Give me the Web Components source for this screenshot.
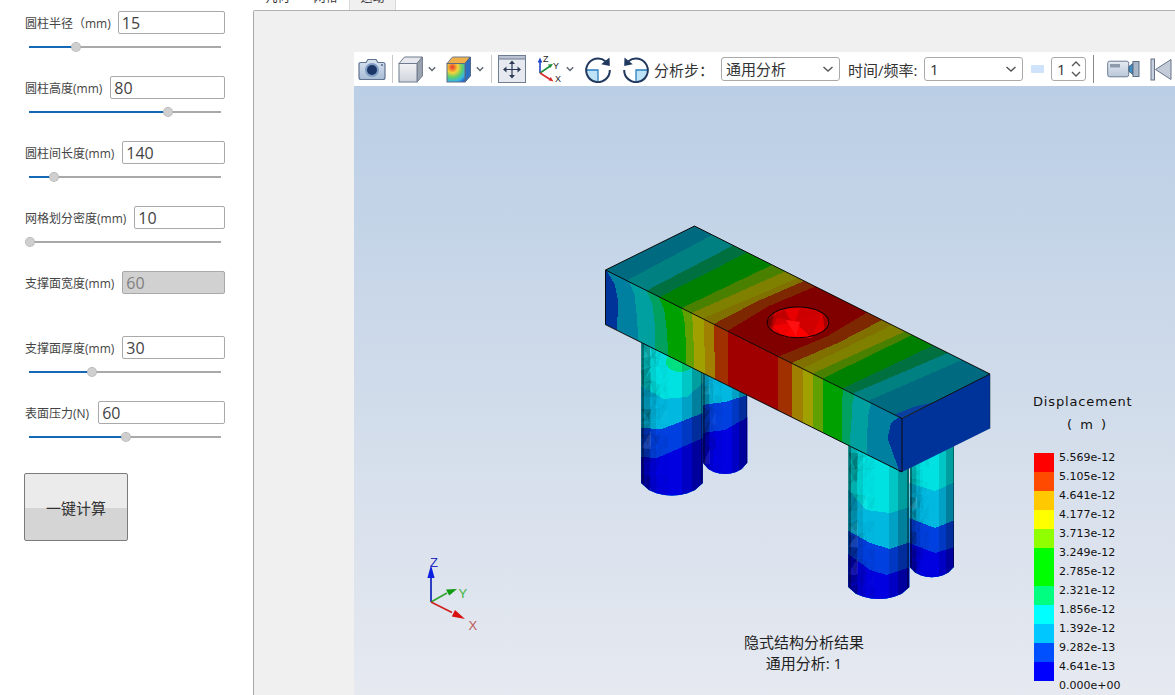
<!DOCTYPE html>
<html lang="zh">
<head>
<meta charset="utf-8">
<title>隐式结构分析</title>
<style>
html,body{margin:0;height:100%;background:#fff;overflow:hidden}
body{font-family:"Open Sans","Noto Sans CJK SC",sans-serif;color:#333}
app-shell{height:695px}
</style>
</head>
<body>
<app-shell>
  <side-panel slot="side">
    <param-row value="15" thumb="47" style="--gap:7px"><span>圆柱半径（mm)</span></param-row>
    <param-row value="80" thumb="139"><span>圆柱高度(mm)</span></param-row>
    <param-row value="140" thumb="25"><span>圆柱间长度(mm)</span></param-row>
    <param-row value="10" thumb="1"><span>网格划分密度(mm)</span></param-row>
    <param-row value="60" disabled><span>支撑面宽度(mm)</span></param-row>
    <param-row value="30" thumb="63"><span>支撑面厚度(mm)</span></param-row>
    <param-row value="60" thumb="97" style="--gap:9px"><span>表面压力(N)</span></param-row>
    <calc-button>一键计算</calc-button>
  </side-panel>
  <tab-strip slot="tabs"></tab-strip>
  <result-viewer slot="main"></result-viewer>
</app-shell>
<script>
const def=(n,html,extra={})=>{customElements.define(n,class extends HTMLElement{
  constructor(){super();this.attachShadow({mode:'open'}).innerHTML=html;}
  connectedCallback(){extra.init&&extra.init.call(this,this.shadowRoot)}
})};

def('app-shell',`<style>
:host{display:grid;grid-template-columns:253px 1fr;grid-template-rows:10px 1fr;width:1175px;overflow:hidden}
.s{grid-row:1/3;min-height:0}
.t{min-width:0}
.m{min-width:0;min-height:0;border-top:1px solid #b0b0b0;border-left:1px solid #a8a8a8;border-top-left-radius:2px;background:#f0f0f0;padding:41px 0 0 100px;overflow:hidden;display:flex}
</style>
<div class="s"><slot name="side"></slot></div>
<div class="t"><slot name="tabs"></slot></div>
<div class="m"><slot name="main"></slot></div>`);

def('side-panel',`<style>:host{display:block;padding:0 28px 0 25px;font-size:12px;color:#444}</style><slot></slot>`);

def('param-row',`<style>
:host{display:block;height:65px;box-sizing:border-box;padding-top:11px}
.top{display:flex;align-items:center;gap:var(--gap,8px);height:23px;white-space:nowrap;font-size:12px;color:#444}
.inp{flex:1;min-width:0;box-sizing:border-box;height:23px;border:1px solid #a9a9a9;border-radius:2px;padding-left:3px;font-size:16px;line-height:23px;color:#444;background:#fff}
:host([disabled]) .inp{background:#d1d1d1;color:#808080}
.sl{display:flex;align-items:center;height:12px;margin:7px 4px 0 4px;}
.f{height:2px;background:#1468b6}
.r{height:2px;flex:1;background:#a9a9a9}
.th{width:10px;height:10px;box-sizing:border-box;border-radius:50%;background:#cfcfcf;border:1px dotted #aaa;margin:0 -5px;position:relative;flex:none}
</style>
<div class="top"><slot></slot><div class="inp"></div></div>
<div class="sl"><div class="f"></div><div class="th"></div><div class="r"></div></div>`,{init(r){
  r.querySelector('.inp').textContent=this.getAttribute('value');
  if(this.hasAttribute('disabled')){r.querySelector('.sl').remove();return}
  r.querySelector('.f').style.width=this.getAttribute('thumb')+'px';
}});

def('calc-button',`<style>
:host{display:flex;width:104px;height:68px;box-sizing:border-box;margin:18px 0 0 -1px;align-items:center;justify-content:center;border:1px solid #7b7b7b;border-radius:2px;font-size:15px;color:#333;background:linear-gradient(#ebebeb 0,#ebebeb 52%,#d5d5d5 52%,#d5d5d5 100%)}
</style><slot></slot>`);

def('tab-strip',`<style>
:host{display:flex;height:10px;overflow:hidden;align-items:flex-end;font-size:12px;color:#333}
.t{width:47px;height:10px;box-sizing:border-box;text-align:center;position:relative;overflow:hidden;flex:none}
.t span{position:absolute;left:0;right:0;bottom:5px;line-height:14px}
.t.f{width:49px}
.t.a{background:#f0f0f0;border-left:1px solid #d8d8d8;border-right:1px solid #d8d8d8}
</style><div class="t f"><span>几何</span></div><div class="t"><span>网格</span></div><div class="t a"><span>运动</span></div>`);

def('tool-select',`<style>
:host{display:flex;box-sizing:border-box;height:24px;align-items:center;justify-content:space-between;border:1px solid #a9a9a9;border-radius:3px;background:#fff;padding:0 5px 0 4px;font-size:15px;color:#333;white-space:nowrap;line-height:22px}
svg{display:block}
</style><slot></slot><svg width="12" height="8" viewBox="0 0 12 8"><path d="M1.5 2L6 6l4.5-4" fill="none" stroke="#555" stroke-width="1.4"/></svg>`);

const chev=`<svg class="ch" width="8" height="6" viewBox="0 0 8 6"><path d="M.8 1.2L4 4.4l3.2-3.2" fill="none" stroke="#5c6470" stroke-width="1.4"/></svg>`;

def('tool-bar',`<style>
:host{display:flex;flex:none;align-items:center;height:34px;background:#fff;font-size:15px;color:#333;white-space:nowrap;overflow:hidden;padding-left:4px}
svg{display:block;flex:none}
.sep{width:1px;height:28px;background:#c8c8c8;flex:none}
.ch{margin-left:5px}
tool-select{flex:none}
.spin{box-sizing:border-box;width:35px;height:24px;border:1px solid #a9a9a9;border-radius:3px;display:flex;align-items:center;justify-content:space-between;padding:0 3px 0 5px;line-height:22px;flex:none}
.sw{width:13px;height:8px;background:#cfe4fb;flex:none;border-radius:1px}
</style>
<svg width="28" height="24" viewBox="0 0 28 24">
 <defs><linearGradient id="b" x1="0" y1="0" x2="0" y2="1"><stop offset="0" stop-color="#d9e3f0"/><stop offset="1" stop-color="#a9bdd6"/></linearGradient></defs>
 <path d="M1 7.5q0-2 2-2h5l2-3h8l2 3h5q2 0 2 2v13q0 2-2 2H3q-2 0-2-2z" fill="url(#b)" stroke="#5f7391" stroke-width="1.2"/>
 <circle cx="14" cy="13" r="7" fill="#7f9cc2"/><circle cx="14" cy="13" r="5" fill="#1b3566"/><circle cx="24" cy="8" r="1" fill="#50688c"/>
</svg>
<div class="sep" style="margin-left:6px"></div>
<svg style="margin-left:5px" width="25" height="27" viewBox="0 0 25 27">
 <defs><linearGradient id="c" x1="0" y1="0" x2="0" y2="1"><stop offset="0" stop-color="#f2f3f6"/><stop offset="1" stop-color="#cfd4dc"/></linearGradient></defs>
 <path d="M1 7.5L6.5 1H24.4L19 7.5z" fill="#e6e8ed" stroke="#6e7b8e"/><path d="M19 7.5L24.4 1V20L19 26z" fill="#9ba3af" stroke="#6e7b8e"/><rect x="1" y="7.5" width="18" height="18.5" fill="url(#c)" stroke="#6e7b8e"/>
</svg>${chev.replace('class="ch"','class="ch" style="margin-left:5px"')}
<svg style="margin-left:10px" width="25" height="27" viewBox="0 0 25 27">
 <defs><radialGradient id="h" cx=".3" cy=".2" r="1"><stop offset="0" stop-color="#e8332a"/><stop offset=".3" stop-color="#f5d23c"/><stop offset=".55" stop-color="#5fd06a"/><stop offset=".78" stop-color="#35b6e6"/><stop offset="1" stop-color="#2255cc"/></radialGradient></defs>
 <path d="M1 7.5L6.5 1H24.4L19 7.5z" fill="#efb04a" stroke="#6e7b8e"/><path d="M19 7.5L24.4 1V20L19 26z" fill="#2b6fc4" stroke="#4b5f80"/><rect x="1" y="7.5" width="18" height="18.5" fill="url(#h)" stroke="#5c6d84"/>
</svg>${chev.replace('class="ch"','class="ch" style="margin-left:5px"')}
<div class="sep" style="margin-left:7px"></div>
<svg style="margin-left:6px" width="28" height="28" viewBox="0 0 28 28">
 <rect x=".5" y=".5" width="27" height="27" fill="#e6e9ef" stroke="#6f7d90"/><rect x=".5" y=".5" width="27" height="3.5" fill="#b9c3d1" stroke="#6f7d90"/>
 <g fill="none" stroke="#2c3a52" stroke-width="1.2"><path d="M14 7v14M7 14.5h14"/></g>
 <g fill="#2c3a52"><path d="M14 5.5l3 3.5h-6zM14 23.5l-3-3.5h6zM5 14.5l3.5-3v6zM23 14.5l-3.5 3v-6z"/></g>
</svg>
<svg style="margin-left:12px" width="24" height="30" viewBox="0 0 24 30">
 <path d="M2 19V7" stroke="#1f43c8" stroke-width="1.6"/><path d="M2 3.5l-2.4 5h4.8z" fill="#1f43c8"/>
 <path d="M2 19L13 11.5" stroke="#1b8f3a" stroke-width="1.6"/><path d="M15 10l-5 .6 2.2 3.3z" fill="#1b8f3a"/>
 <path d="M2 19L13 26" stroke="#d92a2a" stroke-width="1.6"/><path d="M15.5 27.5l-2.8-4.4-2 3.2z" fill="#d92a2a"/>
 <text x="5" y="8" font-size="9" font-family="Liberation Sans" fill="#222">Z</text><text x="15" y="15" font-size="9" font-family="Liberation Sans" fill="#222">Y</text><text x="17" y="28" font-size="9" font-family="Liberation Sans" fill="#222">X</text>
</svg>${chev.replace('class="ch"','class="ch" style="margin-left:4px"')}
<svg style="margin-left:11px" width="26" height="27" viewBox="0 0 26 27">
 <path d="M13 14H2a11.5 11.5 0 0 0 11 11.5z" fill="#bfe3f6"/><path d="M1.5 14H13v11.5" fill="none" stroke="#2a7fc0" stroke-width="1.3"/>
 <path d="M20.5 5.2A11.8 11.8 0 1 0 24.8 14" fill="none" stroke="#21395f" stroke-width="2"/><path d="M24.5 1.5l.3 8.6-8.6-1.8z" fill="#21395f"/>
</svg>
<svg style="margin-left:12px" width="26" height="27" viewBox="0 0 26 27">
 <path d="M13 14h11a11.5 11.5 0 0 1-11 11.5z" fill="#bfe3f6"/><path d="M24.5 14H13v11.5" fill="none" stroke="#2a7fc0" stroke-width="1.3"/>
 <path d="M5.5 5.2A11.8 11.8 0 1 1 1.2 14" fill="none" stroke="#21395f" stroke-width="2"/><path d="M1.5 1.5l-.3 8.6 8.6-1.8z" fill="#21395f"/>
</svg>
<span style="margin-left:5px;width:67px;flex:none">分析步：</span>
<tool-select style="width:119px">通用分析</tool-select>
<span style="margin-left:8px;width:69px;flex:none">时间/频率:</span>
<tool-select style="width:99px;margin-left:7px"><span style="padding-left:1px">1</span></tool-select>
<div class="sw" style="margin-left:8px"></div>
<div class="spin" style="margin-left:7px"><span>1</span><svg width="12" height="20" viewBox="0 0 12 20"><path d="M2 7l4-4 4 4M2 13l4 4 4-4" fill="none" stroke="#555" stroke-width="1.3"/></svg></div>
<div class="sep" style="margin-left:7px;background:#888"></div>
<svg style="margin-left:13px" width="33" height="18" viewBox="0 0 33 18">
 <defs><linearGradient id="v" x1="0" y1="0" x2="0" y2="1"><stop offset="0" stop-color="#e6ebf2"/><stop offset="1" stop-color="#b9c6d8"/></linearGradient></defs>
 <rect x=".7" y="1.2" width="21" height="15.6" rx="2" fill="url(#v)" stroke="#6c7c92"/><rect x="3" y="4" width="10" height="3.5" fill="#8e9bad"/>
 <path d="M22 6.5L26 3.5V14.5L22 11.5z" fill="#3f8fc4" stroke="#33506f" stroke-width=".8"/><rect x="26" y="1.5" width="6" height="15" fill="#aab7c8" stroke="#5d6d84"/>
</svg>
<svg style="margin-left:10px" width="22" height="23" viewBox="0 0 22 23">
 <rect x="1" y="1" width="3.5" height="21" fill="#c6d0de" stroke="#66748a"/>
 <path d="M5.5 11.5L21 1.5V21.5z" fill="#c3ccd8" stroke="#66748a"/>
</svg>`);

def('fem-legend',`<style>
:host{position:absolute;left:680px;top:306px;width:110px;color:#111;font-family:"DejaVu Sans",sans-serif;display:block}
.t{font-size:13px;letter-spacing:.85px;line-height:20px;white-space:nowrap;margin-top:0;margin-left:-1px}
.u{font-size:13px;letter-spacing:2px;line-height:20px;text-align:left;padding-left:33px;margin-top:3px;white-space:pre}
.g{display:grid;grid-template-columns:20px auto;column-gap:5px;margin-top:18px;justify-content:start}
.c{height:19px}
.l{font-size:11px;line-height:19px;height:19px;white-space:nowrap;transform:translateY(-5px)}
.e{grid-column:2;font-size:11px;line-height:19px;height:19px;transform:translateY(-5px)}
</style><div class="t">Displacement</div><div class="u">( m )</div><div class="g"></div>`,{init(r){
  const cs=['#ff0000','#ff4a00','#ffc800','#ffff00','#90ff00','#00ff00','#00ff00','#00ff80','#00ffff','#00c8ff','#0050ff','#0000ff'];
  const ls=['5.569e-12','5.105e-12','4.641e-12','4.177e-12','3.713e-12','3.249e-12','2.785e-12','2.321e-12','1.856e-12','1.392e-12','9.282e-13','4.641e-13'];
  r.querySelector('.g').innerHTML=cs.map((c,i)=>`<div class="c" style="background:${c}"></div><div class="l">${ls[i]}</div>`).join('')+`<div class="e">0.000e+00</div>`;
}});

def('fem-caption',`<style>
:host{position:absolute;left:340px;top:546px;width:220px;text-align:center;font-size:15px;line-height:21px;color:#222;display:block;white-space:nowrap}
</style><div>隐式结构分析结果</div><div>通用分析: 1</div>`);

def('fem-triad',`<style>:host{position:absolute;left:66px;top:465px;width:60px;height:85px;display:block}svg{display:block}</style>
<svg width="60" height="85" viewBox="420 551 60 85" style="overflow:visible">
<g></g></svg>`,{init(r){
  r.querySelector('g').innerHTML=`
  <path d="M431 602V575" stroke="#2f3fc4" stroke-width="2"/><path d="M431 565l-3.6 13h7.2z" fill="#0a1fe0"/>
  <path d="M431 602L447 593" stroke="#2fa52f" stroke-width="1.6"/><path d="M457 589l-11 .6 3.2 6z" fill="#109a10"/>
  <path d="M431 602L452 612.5" stroke="#d02020" stroke-width="1.6"/><path d="M465 619l-10-9-3.2 6.4z" fill="#d81010"/>
  <text x="430" y="567" font-size="13" font-family="Liberation Sans" fill="#2a2fc0">Z</text>
  <text x="458.5" y="597.5" font-size="13" font-family="Liberation Sans" fill="#3fb53f">Y</text>
  <text x="468.5" y="630" font-size="13" font-family="Liberation Sans" fill="#c05a5a">X</text>`;
}});

def('fem-model',`<style>:host{position:absolute;inset:0;display:block}svg{display:block}</style>
<svg width="821" height="609" viewBox="354 86 821 609"></svg>`,{init(r){
  const svg=r.querySelector('svg');let o='';
  let seed=7;const rnd=()=>{seed=(seed*16807)%2147483647;return seed/2147483647};
  const pts=a=>a.map(p=>p[0].toFixed(1)+','+p[1].toFixed(1)).join(' ');
  function leg(id,xl,xr,ytop,ys,sag,top,bands,extra){
    const w=xr-xl;
    const out=[[xl,ytop],[xr,ytop],[xr,ys]];
    const n=8;for(let i=1;i<n;i++){const t=i/n,a=Math.PI*t;out.push([xr-w*t,ys+sag*Math.pow(Math.sin(a),.6)])}
    out.push([xl,ys]);
    o+=`<clipPath id="${id}"><polygon points="${pts(out)}"/></clipPath><g clip-path="url(#${id})" shape-rendering="crispEdges">`;
    o+=`<rect x="${xl}" y="${ytop}" width="${w}" height="300" fill="${top}"/>`;
    bands.forEach(b=>{o+=`<polygon fill="${b.c}" points="${pts([...b.p,[xr+1,ytop+300],[xl-1,ytop+300]])}"/>`});
    if(extra)o+=extra;
    const cellY=13,cols=3;
    for(let y=ytop;y<ys+sag;y+=cellY){for(let c=0;c<cols;c++){
      const x0=xl+c*w*.14,x1=x0+w*.16,jy=()=>(rnd()-.5)*7;
      const a=(c==0?.2:c==1?.09:.04)*rnd();
      o+=`<polygon fill="#000" fill-opacity="${a.toFixed(3)}" points="${pts([[x0,y+jy()],[x1,y+jy()],[x0+rnd()*w*.15,y+cellY+jy()]])}"/>`;
      o+=`<polygon fill="${rnd()>.8?'#fff':'#000'}" fill-opacity="${(a*.7).toFixed(3)}" points="${pts([[x1,y+jy()],[x1,y+cellY+jy()],[x0,y+cellY+jy()]])}"/>`;
    }}
    [[0,.05,.5],[.05,.14,.22],[.14,.24,.08],[.66,.82,.12],[.82,1,.3],[.97,1,.35]].forEach(s=>{
      o+=`<rect x="${xl+w*s[0]}" y="${ytop}" width="${w*(s[1]-s[0])}" height="300" fill="#000" fill-opacity="${s[2]}"/>`});
    o+=`</g>`;
  }
  const cy='#00e2e2',lb='#00b8e0',bl='#0040e0',db='#0000e0';
  leg('l2',702.7,747.3,370,462.6,11.5,lb,[
    {c:bl,p:[[702,405],[725,402],[748,395]]},
    {c:db,p:[[702,433],[725,430],[748,417]]}]);
  leg('l1',641.2,702.7,330,483,12.5,cy,[
    {c:lb,p:[[640,385],[663,399],[687,397],[703,383]]},
    {c:bl,p:[[640,428],[662,429],[703,413]]},
    {c:db,p:[[640,457],[657,458],[703,438]]}],
    `<ellipse cx="680" cy="362" rx="14" ry="10" fill="#00e080"/>`);
  leg('l4',909.5,954,430,566.7,10.5,cy,[
    {c:lb,p:[[909,483],[935,491],[955,482]]},
    {c:bl,p:[[909,518],[935,528],[955,520]]},
    {c:db,p:[[909,543],[935,553],[955,547]]}]);
  leg('l3',848.3,909.3,430,587,12,cy,[
    {c:lb,p:[[847,488],[866,510],[890,513],[910,507]]},
    {c:bl,p:[[847,530],[870,543],[890,549],[910,542]]},
    {c:db,p:[[847,553],[870,570],[887,575],[910,567]]}]);
  const T=(u,w)=>[605.7+u+88.3*w,270+.5*u-44*w];
  const topBands=[
   ['#006a80',0,0],['#008080',21,18],['#007040',41,39],['#008000',54,53],['#4a8000',76,78],['#808000',86,91],['#807000',97,104],['#7d2800',108,110],
   ['#800000',122,121],['#7d2800',173,173],['#807000',186,188],['#808000',197,198],['#4a8000',207,211],['#008000',217,218],['#007040',237,239],['#008080',247,254],['#006a80',262,268]];
  topBands.forEach(b=>{
    const mid=(b[1]+b[2])/2+(b[1]>=122&&b[1]<=173?(b[1]==122?-4:4):(b[1]==108?-2:b[1]==186?2:0));
    o+=`<polygon shape-rendering="crispEdges" fill="${b[0]}" points="${pts([T(b[1],0),T(mid,.5),T(b[2],1),T(296,1),T(296,0)])}"/>`;
  });
  o+=`<polygon fill="#0a3f9f" points="${pts([T(296,0),T(289,0),T(291,.2),T(296,.36)])}"/>`;
  o+=`<polygon fill="#003399" points="902,418.5 990,374 990,428.5 902,472"/>`;
  const F=(u,v)=>[605.5+u,270+.5*u+v];
  const frontBands=[
   ['#003399',0,0,0],
   ['#0080a0',1,13,11],['#00a0a0',24,31,33],['#00a060',41,49,50],['#00a000',53,61,63],['#60a000',76,80,80],['#a0a000',86,88,88],['#a08000',98,99,99],['#a03000',108,109,109],['#a00000',122,122,122],
   ['#a03000',173,172,172],['#a08000',186,186,186],['#a0a000',197,197,197],['#60a000',207,207,207],['#00a000',217,217,217],['#00a060',238,236,236],['#00a0a0',249,246,244],['#0080a0',266,262,261],['#003399',294,282,294]];
  frontBands.forEach(b=>{
    o+=`<polygon shape-rendering="crispEdges" fill="${b[0]}" points="${pts([F(b[1],0),F(b[2]-.3*(b[2]-b[1]),10),F(b[2],27),F(b[3],54.5),F(296,54.5),F(296,0)])}"/>`;
  });
  const H=(a,rx=31,ry=15.5)=>[798+rx*Math.cos(a),322.3+ry*Math.sin(a)];
  const N=20,hole=[];for(let i=0;i<N;i++)hole.push(H(i/N*2*Math.PI));
  o+=`<polygon points="${pts(hole)}" fill="#e00000"/>`;
  const facets=[['#ff0000',[[795,322],[812,338],[784,337]]],['#f00000',[[795,322],[784,337],[772,326]]],['#d80000',[[795,322],[772,326],[780,311]]],['#e80000',[[795,322],[780,311],[800,308]]],['#cc0000',[[795,322],[800,308],[822,312]]],['#d00000',[[795,322],[822,312],[812,338]]],['#ff0000',[[795,322],[806,338],[790,337]]],['#b80000',[[768,323],[780,310],[772,330]]],['#900000',[[767,322],[775,311],[771,329]]],['#7a0000',[[767,322],[772,315],[770,327]]],['#a80000',[[822,311],[829,320],[825,331]]],['#ff1010',[[786,320],[800,322],[796,336]]],['#c00000',[[784,308],[776,318],[790,320]]]];
  facets.forEach(f=>o+=`<polygon fill="${f[0]}" points="${pts(f[1])}"/>`);
  o+=`<polygon points="${pts(hole)}" fill="none" stroke="#1a0000" stroke-width="1.1"/>`;
  o+=`<g fill="none" stroke="#0c0c0c" stroke-width="1">
   <path d="M605.5 270L694.5 226L990 374L902 418.5L605.5 270V324.7L902 472V418.5"/>
   <path d="M990 374V428.5" stroke="#123" stroke-opacity=".5"/></g>`;
  svg.innerHTML=o;
}});

def('result-viewer',`<style>
:host{display:flex;flex-direction:column;flex:1;min-width:0;min-height:0}
.c{flex:1;position:relative;overflow:hidden;background:linear-gradient(#bacee5 0,#e6e9f0 100%)}
</style><tool-bar></tool-bar><div class="c"><fem-model></fem-model><fem-triad></fem-triad><fem-caption></fem-caption><fem-legend></fem-legend></div>`);
</script>
</body>
</html>
